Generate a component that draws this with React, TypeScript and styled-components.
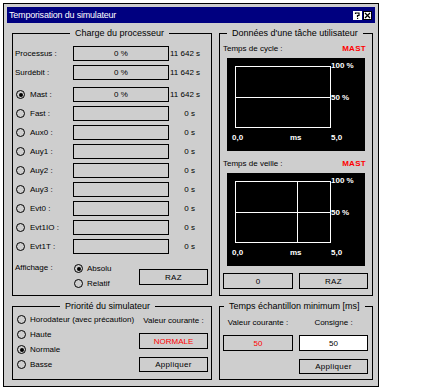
import React from "react";
import styled, { createGlobalStyle } from "styled-components";

const GRAY = "#cecece";

const GlobalStyle = createGlobalStyle`
  html, body {
    margin: 0;
    padding: 0;
    background: #fff;
  }
  body {
    font-family: "Liberation Sans", Arial, sans-serif;
    font-size: 8px;
    color: #000;
  }
`;

const Window = styled.div`
  box-sizing: border-box;
  width: 376px;
  height: 384px;
  margin: 3px 0 0 3px;
  border: 1px solid #000;
  background: ${GRAY};
  padding: 3px;
`;

const TitleBar = styled.div`
  height: 16px;
  background: #000080;
  color: #fff;
  display: flex;
  align-items: center;
  justify-content: space-between;
  padding: 0 3px 0 2px;
  font-size: 9px;
  letter-spacing: -0.2px;
`;

const TitleButtons = styled.div`
  display: flex;
  gap: 1px;
`;

const Body = styled.div`
  display: grid;
  grid-template-columns: 200px 154px;
  grid-template-rows: 263px 74px;
  column-gap: 7px;
  row-gap: 10px;
  padding: 10px 0 0 5px;
`;

const Group = styled.div`
  position: relative;
  box-sizing: border-box;
  border: 1px solid #000;
`;

const Legend = styled.span<{ $left: number }>`
  position: absolute;
  top: -6px;
  left: ${(p) => p.$left}px;
  padding: 0 5px;
  background: ${GRAY};
  font-size: 9px;
  line-height: 11px;
  white-space: nowrap;
`;

/* ---------- Charge du processeur ---------- */

const LoadPanel = styled.div`
  padding: 12px 0 0 2px;
`;

const LoadRow = styled.div<{ $top: number }>`
  display: grid;
  grid-template-columns: 58px 96px 26px;
  height: 15px;
  align-items: center;
  margin-top: ${(p) => p.$top}px;
`;

const RowLabel = styled.div`
  display: flex;
  align-items: center;
  gap: 5px;
  white-space: nowrap;
`;

const Field = styled.div<{ $h?: number; $bg?: string; $color?: string }>`
  box-sizing: border-box;
  height: ${(p) => p.$h ?? 15}px;
  border: 1px solid #000;
  background: ${(p) => p.$bg ?? GRAY};
  color: ${(p) => p.$color ?? "#000"};
  display: flex;
  align-items: center;
  justify-content: center;
  white-space: nowrap;
`;

const Value = styled.div`
  text-align: right;
  white-space: nowrap;
  padding-left: 1px;
`;

const Radio = styled.span<{ $checked?: boolean }>`
  box-sizing: border-box;
  width: 9px;
  height: 9px;
  margin-left: 1px;
  border: 1px solid #000;
  border-radius: 50%;
  display: inline-flex;
  align-items: center;
  justify-content: center;
  flex: none;

  &::after {
    content: "";
    width: 4px;
    height: 4px;
    border-radius: 50%;
    background: ${(p) => (p.$checked ? "#000" : "transparent")};
  }
`;

const DisplayRow = styled.div`
  display: grid;
  grid-template-columns: 58px 66px 69px;
  margin-top: 9px;
`;

const DisplayLabel = styled.div`
  height: 10px;
  line-height: 10px;
`;

const RadioList = styled.div<{ $gap: number }>`
  display: flex;
  flex-direction: column;
  gap: ${(p) => p.$gap}px;
`;

const RadioOption = styled.div`
  display: flex;
  align-items: center;
  gap: 4px;
  height: 11px;
  white-space: nowrap;
`;

const Button = styled.div<{ $top?: number; $h?: number }>`
  box-sizing: border-box;
  margin-top: ${(p) => p.$top ?? 0}px;
  height: ${(p) => p.$h ?? 15}px;
  border: 1px solid #000;
  display: flex;
  align-items: center;
  justify-content: center;
  letter-spacing: 0.3px;
`;

/* ---------- Données d'une tâche ---------- */

const TaskPanel = styled.div`
  display: flex;
  flex-direction: column;
  padding: 10px 6px 0 3px;
`;

const TaskLabel = styled.div<{ $top?: number }>`
  display: flex;
  justify-content: space-between;
  height: 10px;
  line-height: 10px;
  margin-top: ${(p) => p.$top ?? 0}px;
`;

const Red = styled.span`
  color: #ff0000;
  font-weight: bold;
  font-size: 8px;
  letter-spacing: 0.3px;
`;

const ChartBox = styled.svg`
  display: block;
  margin: 4px 0 0 4px;
  background: #000;
`;

const ButtonPair = styled.div`
  display: grid;
  grid-template-columns: 70px 69px;
  column-gap: 6px;
  margin-top: 7px;
`;

/* ---------- Priorité ---------- */

const PriorityPanel = styled.div`
  display: flex;
  justify-content: space-between;
  padding: 7px 3px 0 3px;
`;

const SideColumn = styled.div<{ $w: number }>`
  display: flex;
  flex-direction: column;
  width: ${(p) => p.$w}px;
  padding-top: 2px;
`;

const CenterLabel = styled.div`
  height: 10px;
  line-height: 10px;
  text-align: center;
  white-space: nowrap;
`;

/* ---------- Temps échantillon ---------- */

const SamplePanel = styled.div`
  display: grid;
  grid-template-columns: 70px 69px;
  column-gap: 6px;
  padding: 9px 0 0 3px;
`;

const Chart = ({ split }: { split?: boolean }) => (
  <ChartBox width={138} height={93} viewBox="0 0 138 93">
    <g stroke="#fff" strokeWidth={1} fill="none" shapeRendering="crispEdges">
      <rect x={8.5} y={8.5} width={95} height={61} />
      <line x1={8} y1={39.5} x2={104} y2={39.5} />
      {split && <line x1={70.5} y1={8} x2={70.5} y2={70} />}
    </g>
    <g
      fill="#fff"
      fontFamily="'Liberation Sans', Arial, sans-serif"
      fontSize={8}
      fontWeight="bold"
    >
      <text x={104} y={10}>100 %</text>
      <text x={104} y={42}>50 %</text>
      <text x={5} y={82}>0,0</text>
      <text x={63} y={82}>ms</text>
      <text x={104} y={82}>5,0</text>
    </g>
  </ChartBox>
);

const HelpIcon = () => (
  <svg width={9} height={9} viewBox="0 0 9 9">
    <rect x={0} y={0} width={9} height={9} fill="#fff" />
    <path d="M2.5 3 V2 H6 V4.5 H4.5 V6" stroke="#000" strokeWidth={1.2} fill="none" />
    <rect x={4} y={6.8} width={1.2} height={1.2} fill="#000" />
  </svg>
);

const CloseIcon = () => (
  <svg width={9} height={9} viewBox="0 0 9 9">
    <rect x={0.5} y={0.5} width={8} height={8} fill="#fff" stroke="#000" />
    <path d="M2 2 L7 7 M7 2 L2 7" stroke="#000" strokeWidth={1.3} />
  </svg>
);

const loads = [
  { label: "Processus :", value: "0 %", time: "11 642 s", radio: false, top: 0 },
  { label: "Surdébit :", value: "0 %", time: "11 642 s", radio: false, top: 4 },
  { label: "Mast :", value: "0 %", time: "11 642 s", radio: true, checked: true, top: 7 },
  { label: "Fast :", value: "", time: "0 s", radio: true, top: 4 },
  { label: "Aux0 :", value: "", time: "0 s", radio: true, top: 4 },
  { label: "Auy1 :", value: "", time: "0 s", radio: true, top: 4 },
  { label: "Auy2 :", value: "", time: "0 s", radio: true, top: 4 },
  { label: "Auy3 :", value: "", time: "0 s", radio: true, top: 4 },
  { label: "Evt0 :", value: "", time: "0 s", radio: true, top: 4 },
  { label: "Evt1IO :", value: "", time: "0 s", radio: true, top: 4 },
  { label: "Evt1T :", value: "", time: "0 s", radio: true, top: 4 },
];

const priorities = [
  { label: "Horodateur (avec précaution)", checked: false },
  { label: "Haute", checked: false },
  { label: "Normale", checked: true },
  { label: "Basse", checked: false },
];

export default function App() {
  return (
    <>
      <GlobalStyle />
      <Window>
        <TitleBar>
          <span>Temporisation du simulateur</span>
          <TitleButtons>
            <HelpIcon />
            <CloseIcon />
          </TitleButtons>
        </TitleBar>

        <Body>
          <Group>
            <Legend $left={57}>Charge du processeur</Legend>
            <LoadPanel>
              {loads.map((r) => (
                <LoadRow key={r.label} $top={r.top}>
                  <RowLabel>
                    {r.radio && <Radio $checked={r.checked} />}
                    {r.label}
                  </RowLabel>
                  <Field>{r.value}</Field>
                  <Value>{r.time}</Value>
                </LoadRow>
              ))}
              <DisplayRow>
                <DisplayLabel>Affichage :</DisplayLabel>
                <RadioList $gap={4}>
                  <RadioOption>
                    <Radio $checked />
                    Absolu
                  </RadioOption>
                  <RadioOption>
                    <Radio />
                    Relatif
                  </RadioOption>
                </RadioList>
                <Button $top={6} $h={16}>RAZ</Button>
              </DisplayRow>
            </LoadPanel>
          </Group>

          <Group>
            <Legend $left={7}>Données d'une tâche utilisateur</Legend>
            <TaskPanel>
              <TaskLabel>
                <span>Temps de cycle :</span>
                <Red>MAST</Red>
              </TaskLabel>
              <Chart />
              <TaskLabel $top={8}>
                <span>Temps de veille :</span>
                <Red>MAST</Red>
              </TaskLabel>
              <Chart split />
              <ButtonPair>
                <Button $h={16}>0</Button>
                <Button $h={16}>RAZ</Button>
              </ButtonPair>
            </TaskPanel>
          </Group>

          <Group>
            <Legend $left={47}>Priorité du simulateur</Legend>
            <PriorityPanel>
              <RadioList $gap={4}>
                {priorities.map((p) => (
                  <RadioOption key={p.label}>
                    <Radio $checked={p.checked} />
                    {p.label}
                  </RadioOption>
                ))}
              </RadioList>
              <SideColumn $w={69}>
                <CenterLabel>Valeur courante :</CenterLabel>
                <Field $h={16} $color="#ff0000" style={{ marginTop: 7 }}>
                  NORMALE
                </Field>
                <Button $top={8}>Appliquer</Button>
              </SideColumn>
            </PriorityPanel>
          </Group>

          <Group>
            <Legend $left={4}>Temps échantillon minimum [ms]</Legend>
            <SamplePanel>
              <SideColumn $w={70}>
                <CenterLabel>Valeur courante :</CenterLabel>
                <Field $h={16} $color="#ff0000" style={{ marginTop: 7 }}>
                  50
                </Field>
              </SideColumn>
              <SideColumn $w={69}>
                <CenterLabel>Consigne :</CenterLabel>
                <Field $h={16} $bg="#fff" style={{ marginTop: 7 }}>
                  50
                </Field>
                <Button $top={8}>Appliquer</Button>
              </SideColumn>
            </SamplePanel>
          </Group>
        </Body>
      </Window>
    </>
  );
}
